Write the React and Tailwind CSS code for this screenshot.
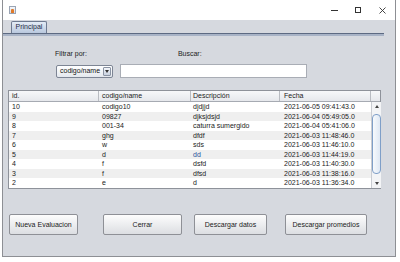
import React from 'react';

const rows = [
  ['10', 'codigo10', 'djdjjd', '2021-06-05 09:41:43.0'],
  ['9', '09827', 'djksjdsjd', '2021-06-04 05:49:05.0'],
  ['8', '001-34', 'caturra sumergido', '2021-06-04 05:41:06.0'],
  ['7', 'ghg', 'dfdf', '2021-06-03 11:48:46.0'],
  ['6', 'w', 'sds', '2021-06-03 11:46:10.0'],
  ['5', 'd', 'dd', '2021-06-03 11:44:19.0'],
  ['4', 'f', 'dsfd', '2021-06-03 11:40:30.0'],
  ['3', 'f', 'dfsd', '2021-06-03 11:38:16.0'],
  ['2', 'e', 'd', '2021-06-03 11:36:34.0'],
];

const Button = ({ label, width }) => (
  <button
    className={`h-[21px] ${width} rounded-[2px] border border-[#8e9096] bg-gradient-to-b from-[#fdfdfd] to-[#dcdee2] text-[7px] text-[#222]`}
  >
    {label}
  </button>
);

const App = () => {
  return (
    <div className="w-[400px] h-[262px] bg-white overflow-hidden" style={{ fontFamily: '"Liberation Sans", Arial, sans-serif' }}>
      <div className="ml-[2px] w-[394px] h-[257px] border-l border-r border-b border-[#8d8f94] flex flex-col">
        {/* Title bar */}
        <div className="h-[20px] bg-white flex items-center shrink-0">
          <div className="ml-[6px] w-[7px] h-[8px] border border-[#9aa4b4] bg-gradient-to-b from-[#f4f7fb] to-[#d8dfe8] flex items-end justify-center">
            <div className="w-[3px] h-[4px] bg-[#e07a2a] rounded-t-[1px]" />
          </div>
          <div className="flex-1" />
          <div className="w-[7px] h-px bg-[#333] mr-[17px]" />
          <div className="w-[6px] h-[6px] border border-[#333] mr-[18px]" />
          <svg width="7" height="7" viewBox="0 0 7 7" className="mr-[9px]">
            <path d="M0.5 0.5 L6.5 6.5 M6.5 0.5 L0.5 6.5" stroke="#333" strokeWidth="0.9" />
          </svg>
        </div>

        {/* Content */}
        <div className="flex-1 bg-[#d6d9df] flex flex-col">
          <div className="h-[13px] pt-[2px] pl-[8px] flex items-end">
            <div className="h-[12px] w-[36px] rounded-t-[2px] border border-b-0 border-[#6e7a90] bg-gradient-to-b from-[#e4ecf6] to-[#b9c8de] flex items-center justify-center text-[7px] text-[#1d2a44]">
              Principal
            </div>
          </div>
          <div className="w-[381px] h-[1px] bg-[#5d6a82]" />
          <div className="w-[381px] h-[2px] bg-[#a8b3c6]" />

          <div className="mt-[14px] h-[8px] flex text-[7px] leading-[8px] text-[#222]">
            <span className="ml-[52px]">Filtrar por:</span>
            <span className="ml-[91px]">Buscar:</span>
          </div>

          <div className="mt-[6px] flex items-center">
            <div className="ml-[53px] w-[57px] h-[13px] rounded-[2px] border border-[#7d8594] bg-gradient-to-b from-[#ffffff] to-[#e4e8ee] flex items-center">
              <span className="flex-1 pl-[3px] text-[7px] text-[#111]">codigo/name</span>
              <div className="w-[8px] h-[9px] mr-[1px] rounded-[1px] border border-[#8a93a3] bg-gradient-to-b from-[#f4f6fa] to-[#c9d2e0] flex items-center justify-center">
                <svg width="4" height="3" viewBox="0 0 4 3">
                  <path d="M0 0 L4 0 L2 3 Z" fill="#333" />
                </svg>
              </div>
            </div>
            <div className="ml-[7px] w-[187px] h-[14px] border border-[#a9adb5] bg-white" />
          </div>

          {/* Table */}
          <div className="mt-[12px] ml-[5px] w-[373px] border border-[#8e929a] bg-white text-[7px] text-[#222]">
            <div className="h-[11px] flex bg-gradient-to-b from-[#f7f8fa] to-[#e6e8ec] border-b border-[#a6aab2]">
              <div className="w-[90px] pl-[3px] border-r border-[#b9bcc2] flex items-center">id.</div>
              <div className="w-[92px] pl-[3px] border-r border-[#b9bcc2] flex items-center">codigo/name</div>
              <div className="w-[89px] pl-[2px] border-r border-[#b9bcc2] flex items-center">Descripción</div>
              <div className="w-[91px] pl-[4px] border-r border-[#b9bcc2] flex items-center">Fecha</div>
              <div className="flex-1" />
            </div>
            <div className="flex">
              <div className="w-[362px]">
                {rows.map((r, i) => (
                  <div key={r[0]} className={`h-[9.5px] flex items-center leading-[9px] ${i % 2 === 1 ? 'bg-[#efefef]' : 'bg-white'}`}>
                    <div className="w-[90px] pl-[3px]">{r[0]}</div>
                    <div className="w-[92px] pl-[3px]">{r[1]}</div>
                    <div className={`w-[89px] pl-[2px] ${r[0] === '5' ? 'text-[#2a4f9a]' : ''}`}>{r[2]}</div>
                    <div className="w-[91px] pl-[4px]">{r[3]}</div>
                  </div>
                ))}
              </div>
              <div className="flex-1 border-l border-[#c9ccd2] bg-[#f3f4f6] flex flex-col items-center">
                <div className="h-[9px] flex items-center">
                  <svg width="4" height="3" viewBox="0 0 4 3">
                    <path d="M0 3 L4 3 L2 0 Z" fill="#444" />
                  </svg>
                </div>
                <div className="mt-[3px] w-[9px] h-[60px] rounded-[4px] border border-[#7f9fc8] bg-gradient-to-r from-[#f7fafd] to-[#dfe8f4]" />
                <div className="flex-1" />
                <div className="h-[9px] flex items-center">
                  <svg width="4" height="3" viewBox="0 0 4 3">
                    <path d="M0 0 L4 0 L2 3 Z" fill="#444" />
                  </svg>
                </div>
              </div>
            </div>
          </div>

          {/* Buttons */}
          <div className="mt-[21px] flex">
            <div className="ml-[6px]"><Button label="Nueva Evaluacion" width="w-[69px]" /></div>
            <div className="ml-[25px]"><Button label="Cerrar" width="w-[79px]" /></div>
            <div className="ml-[12px]"><Button label="Descargar datos" width="w-[73px]" /></div>
            <div className="ml-[18px]"><Button label="Descargar promedios" width="w-[82px]" /></div>
          </div>
        </div>
      </div>
    </div>
  );
};

export default App;
